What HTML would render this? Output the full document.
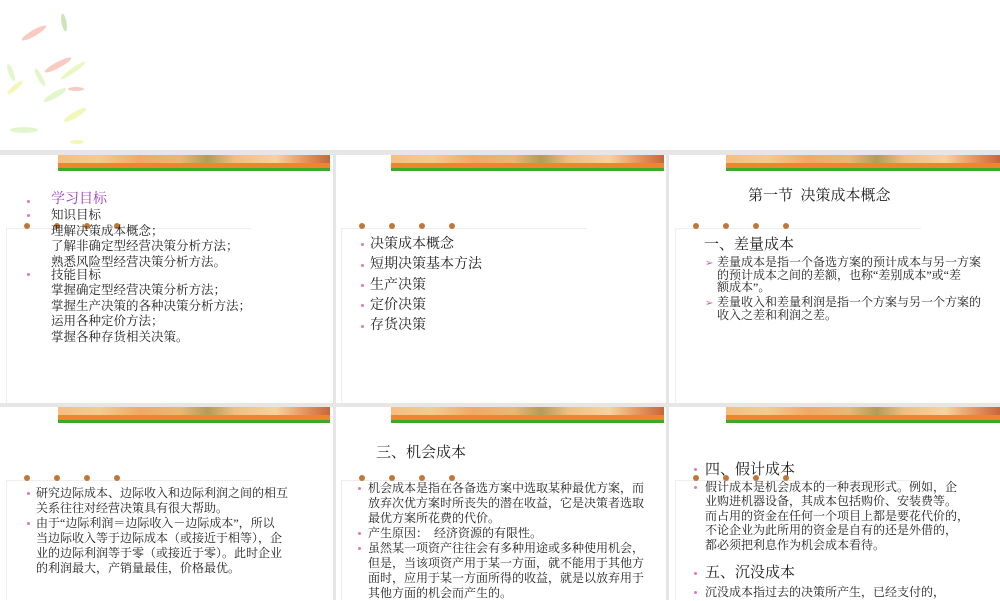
<!DOCTYPE html>
<html><head><meta charset="utf-8"><style>
*{margin:0;padding:0;box-sizing:border-box}
body{width:1000px;height:600px;position:relative;overflow:hidden;background:#fff;font-family:"Liberation Serif","Noto Serif CJK SC","Noto Sans CJK SC",serif;color:#222}
.a{position:absolute}
.g{position:absolute;background:#e6e6e6}
.ban{position:absolute;height:16px;background:#ef8530;border-bottom:3px solid #3ea82a}
.ban:before{content:"";position:absolute;left:0;right:0;top:0;height:8px;background:linear-gradient(90deg,#f6c890 0%,#f3d8a0 15%,#f0b070 30%,#e8c080 45%,#a8a060 55%,#f0c890 65%,#f8e0b0 80%,#e09060 92%,#c06040 100%);opacity:.85}
.box{position:absolute;border-left:1px solid #eee;border-top:1px solid #eee}
.dot{position:absolute;width:6px;height:6px;border-radius:50%;background:#c07838}
.t{position:absolute;white-space:nowrap;font-size:12px;line-height:15px}
.b{position:absolute;width:3px;height:3px;border-radius:50%;background:#e078b8}
.leaf{position:absolute;border-radius:50%;opacity:.55}
</style></head><body>
<div class="leaf" style="left:20px;top:30px;width:28px;height:6px;background:#f0a090;transform:rotate(-30deg)"></div>
<div class="leaf" style="left:55px;top:20px;width:18px;height:5px;background:#a0d080;transform:rotate(80deg)"></div>
<div class="leaf" style="left:43px;top:62px;width:30px;height:6px;background:#f0a090;transform:rotate(-28deg)"></div>
<div class="leaf" style="left:58px;top:68px;width:30px;height:5px;background:#d8f090;transform:rotate(-35deg)"></div>
<div class="leaf" style="left:2px;top:70px;width:18px;height:5px;background:#c8f0a0;transform:rotate(70deg)"></div>
<div class="leaf" style="left:30px;top:75px;width:20px;height:5px;background:#c8f0a0;transform:rotate(60deg)"></div>
<div class="leaf" style="left:42px;top:92px;width:26px;height:6px;background:#c8f0a0;transform:rotate(-30deg)"></div>
<div class="leaf" style="left:68px;top:87px;width:16px;height:4px;background:#f0a090"></div>
<div class="leaf" style="left:62px;top:112px;width:26px;height:6px;background:#e8f080;transform:rotate(-30deg)"></div>
<div class="leaf" style="left:10px;top:127px;width:28px;height:6px;background:#c8f0a0"></div>
<div class="leaf" style="left:5px;top:85px;width:20px;height:5px;background:#e8f080;transform:rotate(-40deg)"></div>
<div class="leaf" style="left:70px;top:140px;width:14px;height:4px;background:#e8f080"></div>
<div class="g" style="left:0;top:150px;width:1000px;height:5px"></div>
<div class="g" style="left:0;top:403px;width:1000px;height:4px"></div>
<div class="g" style="left:333px;top:150px;width:3px;height:450px"></div>
<div class="g" style="left:666px;top:150px;width:3px;height:450px"></div>
<div class="ban" style="left:58px;top:155px;width:272px"></div>
<div class="ban" style="left:391px;top:155px;width:273px"></div>
<div class="ban" style="left:726px;top:155px;width:274px"></div>
<div class="ban" style="left:58px;top:407px;width:272px"></div>
<div class="ban" style="left:391px;top:407px;width:273px"></div>
<div class="ban" style="left:726px;top:407px;width:274px"></div>
<div class="box" style="left:6px;top:228px;width:246px;height:175px"></div>
<div class="box" style="left:341px;top:228px;width:246px;height:175px"></div>
<div class="box" style="left:675px;top:228px;width:246px;height:175px"></div>
<div class="box" style="left:6px;top:480px;width:246px;height:120px"></div>
<div class="box" style="left:341px;top:480px;width:246px;height:120px"></div>
<div class="box" style="left:675px;top:480px;width:246px;height:120px"></div>
<div class="dot" style="left:24px;top:223px"></div><div class="dot" style="left:54px;top:223px"></div><div class="dot" style="left:84px;top:223px"></div><div class="dot" style="left:114px;top:223px"></div>
<div class="dot" style="left:359px;top:223px"></div><div class="dot" style="left:389px;top:223px"></div><div class="dot" style="left:419px;top:223px"></div><div class="dot" style="left:449px;top:223px"></div>
<div class="dot" style="left:693px;top:223px"></div><div class="dot" style="left:723px;top:223px"></div><div class="dot" style="left:753px;top:223px"></div><div class="dot" style="left:783px;top:223px"></div>
<div class="dot" style="left:24px;top:475px"></div><div class="dot" style="left:54px;top:475px"></div><div class="dot" style="left:84px;top:475px"></div><div class="dot" style="left:114px;top:475px"></div>
<div class="dot" style="left:359px;top:475px"></div><div class="dot" style="left:389px;top:475px"></div><div class="dot" style="left:419px;top:475px"></div><div class="dot" style="left:449px;top:475px"></div>
<div class="dot" style="left:693px;top:475px"></div><div class="dot" style="left:723px;top:475px"></div><div class="dot" style="left:753px;top:475px"></div><div class="dot" style="left:783px;top:475px"></div>
<div class="b" style="left:27px;top:200px"></div>
<div class="t" style="left:51px;top:191px;font-size:14px;line-height:18px;color:#a040c0">学习目标</div>
<div class="b" style="left:27px;top:214px"></div>
<div class="t" style="left:51px;top:208px;line-height:15.6px;font-size:12.5px">知识目标<br>理解决策成本概念；<br>了解非确定型经营决策分析方法；<br>熟悉风险型经营决策分析方法。</div>
<div class="b" style="left:27px;top:273px"></div>
<div class="t" style="left:51px;top:268px;line-height:15.4px;font-size:12.5px">技能目标<br>掌握确定型经营决策分析方法；<br>掌握生产决策的各种决策分析方法；<br>运用各种定价方法；<br>掌握各种存货相关决策。</div>
<div class="b" style="left:361px;top:243px"></div><div class="b" style="left:361px;top:264px"></div><div class="b" style="left:361px;top:284px"></div><div class="b" style="left:361px;top:304px"></div><div class="b" style="left:361px;top:325px"></div>
<div class="t" style="left:370px;top:235px;font-size:14px;line-height:20.3px">决策成本概念<br>短期决策基本方法<br>生产决策<br>定价决策<br>存货决策</div>
<div class="t" style="left:748px;top:187px;font-size:15px;line-height:18px">第一节&nbsp; 决策成本概念</div>
<div class="t" style="left:704px;top:236px;font-size:15px;line-height:18px">一、差量成本</div>
<div class="t" style="left:705px;top:256px;font-size:10px;color:#d060b0">➢</div>
<div class="t" style="left:717px;top:256px;line-height:12.6px">差量成本是指一个备选方案的预计成本与另一方案<br>的预计成本之间的差额，也称“差别成本”或“差<br>额成本”。</div>
<div class="t" style="left:705px;top:296px;font-size:10px;color:#d060b0">➢</div>
<div class="t" style="left:717px;top:296px;line-height:12.6px">差量收入和差量利润是指一个方案与另一个方案的<br>收入之差和利润之差。</div>
<div class="b" style="left:27px;top:492px"></div><div class="b" style="left:27px;top:522px"></div>
<div class="t" style="left:36px;top:486px;line-height:15px">研究边际成本、边际收入和边际利润之间的相互<br>关系往往对经营决策具有很大帮助。</div>
<div class="t" style="left:36px;top:516px;line-height:15px">由于“边际利润＝边际收入－边际成本”，所以<br>当边际收入等于边际成本（或接近于相等），企<br>业的边际利润等于零（或接近于零）。此时企业<br>的利润最大，产销量最佳，价格最优。</div>
<div class="t" style="left:376px;top:444px;font-size:15px;line-height:18px">三、机会成本</div>
<div class="b" style="left:358px;top:487px"></div><div class="b" style="left:358px;top:532px"></div><div class="b" style="left:358px;top:547px"></div>
<div class="t" style="left:368px;top:481px;line-height:15px">机会成本是指在各备选方案中选取某种最优方案，而<br>放弃次优方案时所丧失的潜在收益，它是决策者选取<br>最优方案所花费的代价。</div>
<div class="t" style="left:368px;top:526px;line-height:15px">产生原因：&nbsp; 经济资源的有限性。</div>
<div class="t" style="left:368px;top:541px;line-height:15px">虽然某一项资产往往会有多种用途或多种使用机会，<br>但是，当该项资产用于某一方面，就不能用于其他方<br>面时，应用于某一方面所得的收益，就是以放弃用于<br>其他方面的机会而产生的。</div>
<div class="b" style="left:694px;top:468px"></div>
<div class="t" style="left:705px;top:461px;font-size:15px;line-height:18px">四、假计成本</div>
<div class="b" style="left:694px;top:486px"></div>
<div class="t" style="left:705px;top:480px;line-height:14.4px">假计成本是机会成本的一种表现形式。例如，企<br>业购进机器设备，其成本包括购价、安装费等。<br>而占用的资金在任何一个项目上都是要花代价的，<br>不论企业为此所用的资金是自有的还是外借的，<br>都必须把利息作为机会成本看待。</div>
<div class="b" style="left:694px;top:572px"></div>
<div class="t" style="left:705px;top:564px;font-size:15px;line-height:18px">五、沉没成本</div>
<div class="b" style="left:694px;top:591px"></div>
<div class="t" style="left:705px;top:585px;line-height:15px">沉没成本指过去的决策所产生，已经支付的，</div>
</body></html>
